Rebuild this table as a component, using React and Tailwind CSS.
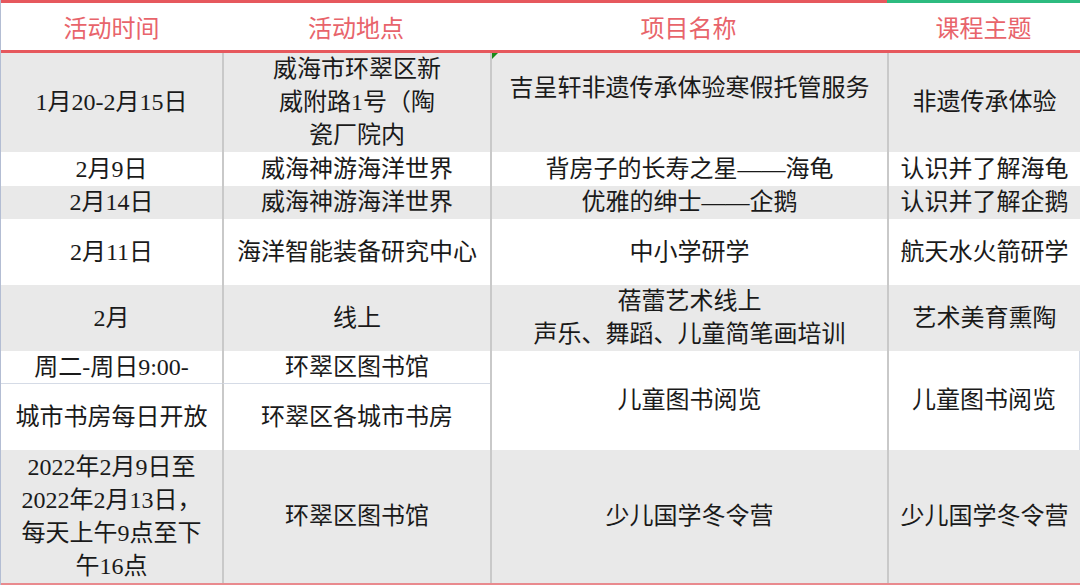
import React from "react";

const font = { fontFamily: "'Liberation Serif', 'Noto Sans CJK SC', serif" };

// cell base: centered text, tight line height like the spreadsheet
const cell = "flex flex-col items-center justify-center text-center text-[24px] leading-[33px] text-[#1a1a1a] whitespace-nowrap";
const gray = "bg-[#e9e9e9]";
const white = "bg-white";
const vline = "border-l-2 border-[#c9c9c9]";
const head = "row-start-1 border-t-[3px] flex items-center justify-center pt-[5px] text-[24px] text-[#e8646b]";

export default function App() {
  return (
    <div className="w-[1080px] h-[585px] overflow-hidden bg-white border-l border-[#b3bdd3]" style={font}>
      <div className="grid grid-cols-[221px_268px_397px_193px] grid-rows-[50px_3px_99px_34px_33px_66px_66px_33px_66px_133px_2px]">
        {/* HEADER */}
        <div className={`${head} col-start-1 border-[#e6585d]`}>活动时间</div>
        <div className={`${head} col-start-2 border-[#e6585d]`}>活动地点</div>
        <div className={`${head} col-start-3 border-[#e6585d]`}>项目名称</div>
        <div className={`${head} col-start-4 border-[#2dbb80]`}>课程主题</div>
        <div className="col-span-4 row-start-2 bg-[#e6585d]" />

        {/* ROW 1 */}
        <div className={`${cell} ${gray} col-start-1 row-start-3`}>1月20-2月15日</div>
        <div className={`${cell} ${gray} ${vline} col-start-2 row-start-3`}>
          <span>威海市环翠区新</span>
          <span>威附路1号（陶</span>
          <span>瓷厂院内</span>
        </div>
        <div className={`${cell} ${gray} ${vline} col-start-3 row-start-3 relative !justify-start pt-[19px]`}>
          <span className="absolute left-0 top-0 w-0 h-0 border-t-[6px] border-r-[6px] border-t-[#1a8a1a] border-r-transparent" />
          吉呈轩非遗传承体验寒假托管服务
        </div>
        <div className={`${cell} ${gray} ${vline} col-start-4 row-start-3`}>非遗传承体验</div>

        {/* ROW 2 */}
        <div className={`${cell} ${white} col-start-1 row-start-4`}>2月9日</div>
        <div className={`${cell} ${white} ${vline} col-start-2 row-start-4`}>威海神游海洋世界</div>
        <div className={`${cell} ${white} ${vline} col-start-3 row-start-4`}>背房子的长寿之星——海龟</div>
        <div className={`${cell} ${white} ${vline} col-start-4 row-start-4`}>认识并了解海龟</div>

        {/* ROW 3 */}
        <div className={`${cell} ${gray} col-start-1 row-start-5`}>2月14日</div>
        <div className={`${cell} ${gray} ${vline} col-start-2 row-start-5`}>威海神游海洋世界</div>
        <div className={`${cell} ${gray} ${vline} col-start-3 row-start-5`}>优雅的绅士——企鹅</div>
        <div className={`${cell} ${gray} ${vline} col-start-4 row-start-5`}>认识并了解企鹅</div>

        {/* ROW 4 */}
        <div className={`${cell} ${white} col-start-1 row-start-6`}>2月11日</div>
        <div className={`${cell} ${white} ${vline} col-start-2 row-start-6`}>海洋智能装备研究中心</div>
        <div className={`${cell} ${white} ${vline} col-start-3 row-start-6`}>中小学研学</div>
        <div className={`${cell} ${white} ${vline} col-start-4 row-start-6`}>航天水火箭研学</div>

        {/* ROW 5 */}
        <div className={`${cell} ${gray} col-start-1 row-start-7`}>2月</div>
        <div className={`${cell} ${gray} ${vline} col-start-2 row-start-7`}>线上</div>
        <div className={`${cell} ${gray} ${vline} col-start-3 row-start-7`}>
          <span>蓓蕾艺术线上</span>
          <span>声乐、舞蹈、儿童简笔画培训</span>
        </div>
        <div className={`${cell} ${gray} ${vline} col-start-4 row-start-7`}>艺术美育熏陶</div>

        {/* ROW 6 + 7 */}
        <div className={`${cell} ${white} col-start-1 row-start-8 border-b border-[#d5dbe6]`}>周二-周日9:00-</div>
        <div className={`${cell} ${white} ${vline} col-start-2 row-start-8 border-b border-b-[#d5dbe6]`}>环翠区图书馆</div>
        <div className={`${cell} ${white} ${vline} col-start-3 row-start-8 row-span-2`}>儿童图书阅览</div>
        <div className={`${cell} ${white} ${vline} col-start-4 row-start-8 row-span-2 border-r border-r-[#d5dbe6]`}>儿童图书阅览</div>
        <div className={`${cell} ${white} col-start-1 row-start-9`}>城市书房每日开放</div>
        <div className={`${cell} ${white} ${vline} col-start-2 row-start-9`}>环翠区各城市书房</div>

        {/* ROW 8 */}
        <div className={`${cell} ${gray} col-start-1 row-start-10`}>
          <span>2022年2月9日至</span>
          <span>2022年2月13日，</span>
          <span>每天上午9点至下</span>
          <span>午16点</span>
        </div>
        <div className={`${cell} ${gray} ${vline} col-start-2 row-start-10`}>环翠区图书馆</div>
        <div className={`${cell} ${gray} ${vline} col-start-3 row-start-10`}>少儿国学冬令营</div>
        <div className={`${cell} ${gray} ${vline} col-start-4 row-start-10`}>少儿国学冬令营</div>

        <div className="col-span-4 row-start-11 bg-[#e98a8e]" />
      </div>
    </div>
  );
}
